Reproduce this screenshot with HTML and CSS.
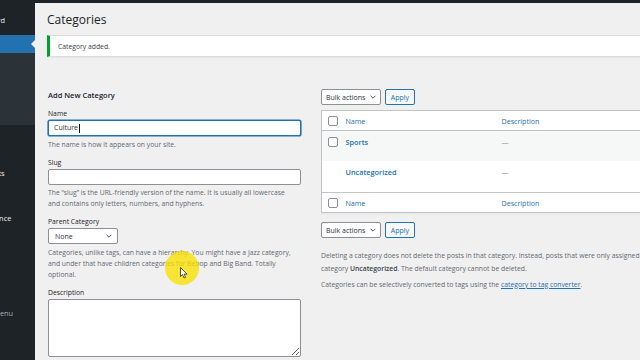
FILE: index.html
```html
<!DOCTYPE html>
<html lang="en">
<head>
<meta charset="utf-8">
<title>Categories</title>
<link rel="stylesheet" href="styles.css">
</head>
<body>
<div class="adminbar"></div>
<div class="layout">
  <nav class="sidebar">
    <div class="menu">
      <div class="menu-item first">Dashboard</div>
      <div class="menu-item active">Posts</div>
      <div class="submenu">
        <div class="sub-item">All Posts</div>
        <div class="sub-item">Add New</div>
        <div class="sub-item current">Categories</div>
        <div class="sub-item">Tags</div>
      </div>
      <div class="menu-item">Media</div>
      <div class="menu-item">Pages</div>
      <div class="menu-item">Comments</div>
      <div class="menu-item sep">Appearance</div>
      <div class="menu-item">Plugins</div>
      <div class="menu-item">Users</div>
      <div class="menu-item">Tools</div>
      <div class="menu-item">Settings</div>
      <div class="menu-item collapse">Collapse menu</div>
    </div>
  </nav>
  <main class="content">
    <h1 class="page-title">Categories</h1>
    <div class="notice"><p>Category added.</p></div>
    <div class="cols">
      <div class="col-left">
        <h2 class="form-title">Add New Category</h2>
        <div class="field">
          <label>Name</label>
          <div class="input focused">Culture<span class="caret"></span></div>
          <p class="hint">The name is how it appears on your site.</p>
        </div>
        <div class="field">
          <label>Slug</label>
          <div class="input"></div>
          <p class="hint">The “slug” is the URL-friendly version of the name. It is usually all lowercase<br>and contains only letters, numbers, and hyphens.</p>
        </div>
        <div class="field">
          <label>Parent Category</label>
          <div class="select parent"><span>None</span><svg class="chev" viewBox="0 0 10 6" width="6" height="4"><path d="M1 1 L5 5 L9 1" fill="none" stroke="#50575e" stroke-width="1.6"/></svg></div>
          <p class="hint">Categories, unlike tags, can have a hierarchy. You might have a Jazz category,<br>and under that have children categories for Bebop and Big Band. Totally<br>optional.</p>
        </div>
        <div class="field">
          <label>Description</label>
          <textarea class="textarea"></textarea>
        </div>
      </div>
      <div class="col-right">
        <div class="tablenav">
          <div class="select bulk"><span>Bulk actions</span><svg class="chev" viewBox="0 0 10 6" width="6" height="4"><path d="M1 1 L5 5 L9 1" fill="none" stroke="#50575e" stroke-width="1.6"/></svg></div>
          <div class="button">Apply</div>
        </div>
        <table class="terms">
          <colgroup><col class="c-cb"><col class="c-name"><col></colgroup>
          <thead>
            <tr><td class="cb"><span class="checkbox"></span></td><th>Name</th><th>Description</th></tr>
          </thead>
          <tbody>
            <tr class="odd"><td class="cb"><span class="checkbox"></span></td><td><a class="row-title">Sports</a></td><td class="dash">—</td></tr>
            <tr class="even"><td class="cb"></td><td><a class="row-title">Uncategorized</a></td><td class="dash">—</td></tr>
          </tbody>
          <tfoot>
            <tr><td class="cb"><span class="checkbox"></span></td><th>Name</th><th>Description</th></tr>
          </tfoot>
        </table>
        <div class="tablenav bottom">
          <div class="select bulk"><span>Bulk actions</span><svg class="chev" viewBox="0 0 10 6" width="6" height="4"><path d="M1 1 L5 5 L9 1" fill="none" stroke="#50575e" stroke-width="1.6"/></svg></div>
          <div class="button">Apply</div>
        </div>
        <p class="note first">Deleting a category does not delete the posts in that category. Instead, posts that were only assigned to the deleted category are set to the default<br>category <strong>Uncategorized</strong>. The default category cannot be deleted.</p>
        <p class="note">Categories can be selectively converted to tags using the <a class="link">category to tag converter</a>.</p>
      </div>
    </div>
  </main>
</div>
<div class="cursor-hl"></div>
<svg class="pointer" viewBox="0 0 8 12" width="8" height="12"><path d="M0.5 0.5 L0.5 9.5 L2.6 7.6 L4.1 11 L5.5 10.4 L4.1 7.1 L7 7.1 Z" fill="#fff" stroke="#111" stroke-width="0.7" stroke-linejoin="round"/></svg>
</body>
</html>
```

FILE: styles.css
```css
* { box-sizing: border-box; }
html, body { margin: 0; padding: 0; }
body {
  width: 640px;
  height: 360px;
  overflow: hidden;
  position: relative;
  background: #f0f0f1;
  font-family: "Open Sans", "Noto Sans", sans-serif;
  font-size: 6.8px;
  color: #3c434a;
}
.adminbar { height: 3px; background: #1d2327; }
.layout { display: flex; height: 357px; }

/* sidebar */
.sidebar { width: 35px; flex: none; background: #1d2327; overflow: hidden; }
.menu { width: 88px; margin-left: -53px; padding-top: 8px; }
.menu-item {
  height: 18px; line-height: 18px; padding-left: 20px;
  color: #f0f0f1; font-size: 7.4px; white-space: nowrap;
}
.menu-item.first { margin-bottom: 6px; }
.menu-item.active { background: #2271b1; color: #fff; position: relative; }
.menu-item.active::after {
  content: ""; position: absolute; right: 0; top: 5px;
  border: 4px solid transparent; border-right-color: #f0f0f1; border-left-width: 0;
}
.submenu { background: #2c3338; padding: 4px 0 4px; margin-bottom: 3px; }
.sub-item { height: 16px; line-height: 16px; padding-left: 7px; font-size: 7px; color: rgba(240,246,252,.7); white-space: nowrap; }
.sub-item.current { color: #fff; font-weight: 600; }
.menu-item.sep { margin-top: 27px; padding-left: 23px; }
.menu-item.collapse { margin-top: 5px; padding-left: 15px; color: #a7aaad; }

/* content */
.content { flex: none; width: 620px; padding-left: 12px; }
.page-title {
  margin: 0; padding-top: 9px;
  font-size: 12px; font-weight: 400; line-height: 16px; color: #1d2327;
}
.notice {
  margin-top: 7px; height: 22px;
  background: #fff;
  border: 1px solid #dcdcde; border-left: 3px solid #00a32a;
  box-shadow: 0 1px 1px rgba(0,0,0,.04);
  padding-left: 8px;
}
.notice p { margin: 0; line-height: 21px; color: #3c434a; }

.cols { display: flex; margin-top: 32px; padding-left: 1px; }
.col-left { width: 253px; flex: none; }
.col-right { width: 560px; flex: none; margin-left: 20px; }

.form-title { margin: 0; font-size: 7.5px; font-weight: 600; line-height: 12px; color: #1d2327; }
.field { margin-top: 8px; }
.field label { display: block; line-height: 10px; color: #1d2327; }
.input {
  margin-top: 1px; height: 16px;
  background: #fff; border: 1px solid #8c8f94; border-radius: 2px;
  padding: 0 5px; line-height: 14px; font-size: 7px; color: #2c3338;
  display: flex; align-items: center;
}
.input.focused { border-color: #2271b1; box-shadow: 0 0 0 0.6px #2271b1; }
.caret { display: inline-block; width: 0.8px; height: 9px; background: #111; margin-left: 0.5px; }
.hint { margin: 2.5px 0 0; line-height: 11px; color: #646970; }

.select {
  height: 16px; background: #fff; border: 1px solid #8c8f94; border-radius: 2px;
  display: flex; align-items: center; justify-content: space-between;
  padding: 0 5px 0 5px; font-size: 7px; color: #2c3338;
}
.select.parent { margin-top: 1px; width: 70px; padding-left: 6px; }
.chev { display: block; }
.textarea {
  display: block; margin: 1px 0 0; width: 100%; height: 58px;
  background: #fff; border: 1px solid #8c8f94; border-radius: 2px;
  resize: both; font: inherit;
}

/* right column */
.tablenav { display: flex; gap: 4px; height: 16px; }
.select.bulk { width: 60px; padding-left: 4px; padding-right: 4px; }
.button {
  width: 30px; height: 16px; border: 1px solid #2271b1; border-radius: 2px;
  background: #f6f7f7; color: #2271b1; font-size: 7px;
  display: flex; align-items: center; justify-content: center;
}
.terms {
  margin-top: 5px; width: 100%;
  border: 1px solid #c3c4c7; border-collapse: collapse; background: #fff;
  table-layout: fixed; font-size: 7.1px;
  box-shadow: 0 1px 1px rgba(0,0,0,.04);
}
.c-cb { width: 19px; }
.c-name { width: 156px; }
.terms th { text-align: left; font-weight: 400; color: #2271b1; padding: 0 5px; height: 20px; }
.terms thead tr { border-bottom: 1px solid #c3c4c7; }
.terms tfoot tr { border-top: 1px solid #c3c4c7; }
.terms thead .cb, .terms tfoot .cb { vertical-align: middle; }
.terms td { padding: 6px 5px 0; vertical-align: top; line-height: 10px; }
.terms thead td, .terms tfoot td { padding-top: 0; }
.terms td.cb { padding-left: 6px; padding-right: 0; }
.terms tbody tr.odd { background: #f6f7f7; height: 30px; }
.terms tbody tr.even { background: #fff; height: 32px; }
.checkbox {
  display: block; width: 10px; height: 10px;
  border: 1px solid #8c8f94; border-radius: 2px; background: #fff;
}
.row-title { color: #2271b1; font-weight: 600; font-size: 7.3px; }
.dash { color: #8c8f94; }

.tablenav.bottom { margin-top: 9px; }
.note { margin: 3px 0 0; line-height: 13px; color: #646970; }
.note.first { margin-top: 10.5px; }
.note strong { color: #3c434a; font-weight: 600; }
.link { color: #2271b1; text-decoration: underline; }

/* screen-recording overlay */
.cursor-hl {
  position: absolute; left: 165px; top: 251px; width: 34px; height: 34px;
  border-radius: 50%; background: rgba(250, 224, 0, .78);
}
.pointer { position: absolute; left: 180px; top: 267px; }
```
